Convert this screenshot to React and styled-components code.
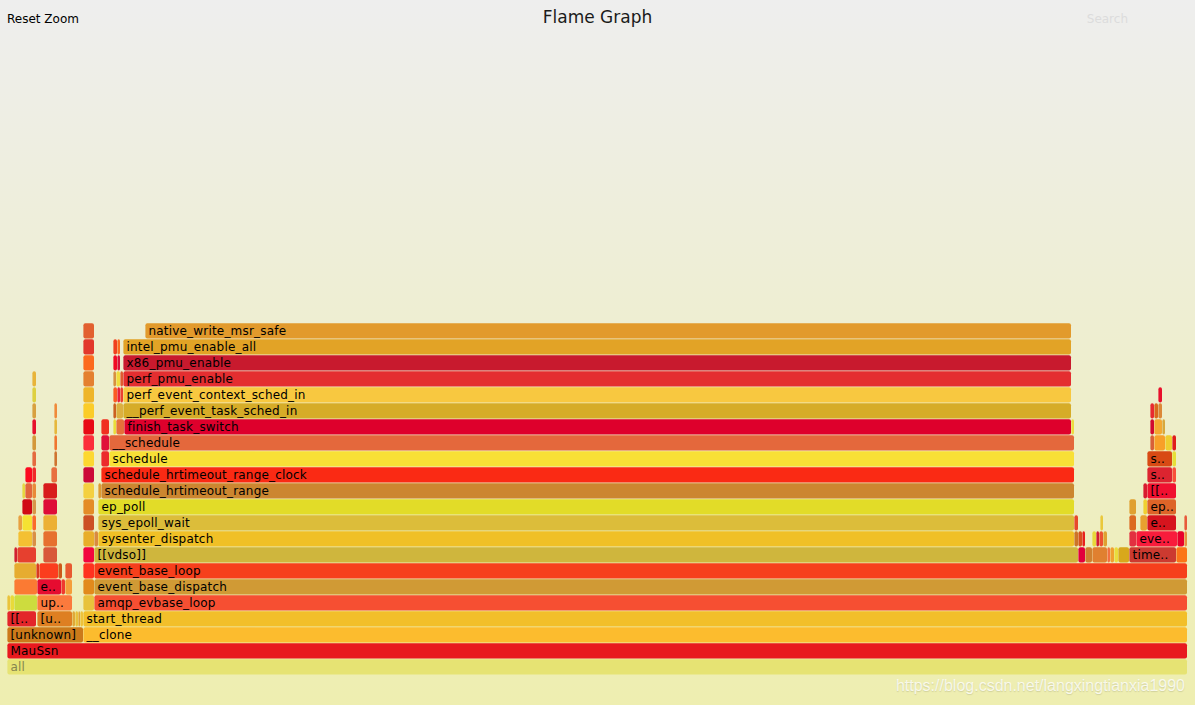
import React from "react";
import styled, { createGlobalStyle } from "styled-components";

const GlobalStyle = createGlobalStyle`
  html, body {
    margin: 0;
    height: 100%;
    overflow: hidden;
  }
  body {
    font-family: "DejaVu Sans", Verdana, sans-serif;
  }
`;

const Page = styled.div`
  position: relative;
  display: flex;
  flex-direction: column;
  justify-content: space-between;
  height: 100vh;
  background: linear-gradient(to bottom, #eeeeee, #eeeeb0);
`;

const Header = styled.header`
  display: grid;
  grid-template-columns: 1fr auto 1fr;
  align-items: start;
  padding: 8px 7px 0;
`;

const HeaderLink = styled.span`
  margin-top: 1px;
  margin-right: ${(p) => p.$inset || 0}px;
  font-size: 12px;
  line-height: 20px;
  color: ${(p) => p.$color || "#000"};
  justify-self: ${(p) => p.$align || "start"};
`;

const Title = styled.h1`
  margin: 0;
  font-size: 17px;
  font-weight: 400;
  line-height: 18px;
  color: #1a1a1a;
`;

const Chart = styled.svg`
  display: block;
  width: 1195px;
  height: 385px;
`;

const Frame = styled.rect`
  rx: 2px;
  ry: 2px;
  height: 15.2px;
`;

const FrameLabel = styled.text`
  font-family: "DejaVu Sans", Verdana, sans-serif;
  font-size: 12px;
  letter-spacing: 0.19px;
  fill: ${(p) => p.$color || "#000"};
`;

const Watermark = styled.div`
  position: absolute;
  right: 10px;
  bottom: 9px;
  font-family: "Liberation Sans", Arial, sans-serif;
  font-size: 16px;
  line-height: 20px;
  color: rgba(255, 255, 255, 0.78);
  text-shadow: 0 1px 1px rgba(110, 110, 80, 0.22);
`;

// one list per stack depth, bottom row first: [x1, x2, colour, label]
const rows = [
  [[7, 1187, "#e6e373", "all"]],
  [[7, 1187, "#e8191e", "MauSsn"]],
  [
    [7, 83, "#cc7a1a", "[unknown]"],
    [83, 1187, "#fcbc2e", "__clone"],
  ],
  [
    [7, 36, "#e3262a", "[[.."],
    [37, 72, "#de7f22", "[u.."],
    [72, 75, "#e0a838"],
    [75, 78, "#e8c03a"],
    [78, 80, "#e0a030"],
    [80, 83, "#eec23a"],
    [83, 1187, "#f2bf2a", "start_thread"],
  ],
  [
    [7, 10, "#eac33a"],
    [10, 14, "#e8da3a"],
    [14, 37, "#cddc3e"],
    [37, 72, "#fb7a3d", "up.."],
    [83, 94, "#e8c23c"],
    [94, 1187, "#f64f32", "amqp_evbase_loop"],
  ],
  [
    [14, 37, "#fb7a33"],
    [37, 61, "#e60c30", "e.."],
    [61, 65, "#ef3a2f"],
    [65, 72, "#f59e3a"],
    [83, 94, "#e28a1c"],
    [94, 1187, "#d09a35", "event_base_dispatch"],
  ],
  [
    [14, 36, "#e6ac30"],
    [36, 39, "#d93a20"],
    [39, 58, "#fb3d1e"],
    [58, 62, "#cc5a1a"],
    [65, 72, "#e85a30"],
    [83, 94, "#ff3220"],
    [94, 1187, "#f63f1c", "event_base_loop"],
  ],
  [
    [14, 17, "#d22030"],
    [17, 36, "#e6402f"],
    [43, 57, "#d8583a"],
    [83, 94, "#f2063e"],
    [94, 1078, "#cfb63d", "[[vdso]]"],
    [1078, 1085, "#e2003c"],
    [1085, 1092, "#cf8030"],
    [1092, 1107, "#e08030"],
    [1107, 1110, "#f27040"],
    [1110, 1114, "#f0a030"],
    [1114, 1118, "#eadc3c"],
    [1118, 1129, "#d8a81c"],
    [1129, 1176, "#cc3a30", "time.."],
    [1176, 1187, "#fb7518"],
  ],
  [
    [18, 32, "#f4c032"],
    [32, 36, "#d98f45"],
    [43, 57, "#e6702f"],
    [83, 94, "#e8ae2a"],
    [94, 98, "#d98a40"],
    [98, 1074, "#f0c026", "sysenter_dispatch"],
    [1074, 1078, "#cc7428"],
    [1078, 1082, "#d8501e"],
    [1082, 1085, "#e8201c"],
    [1092, 1096, "#e8d83a"],
    [1096, 1099, "#d01c30"],
    [1099, 1103, "#ec5030"],
    [1103, 1107, "#e0a030"],
    [1129, 1136, "#e23040"],
    [1136, 1177, "#f81c3c", "eve.."],
    [1177, 1184, "#e8002c"],
    [1184, 1187, "#e89040"],
  ],
  [
    [18, 22, "#e8a040"],
    [22, 32, "#f5e232"],
    [32, 36, "#fa6a2a"],
    [43, 57, "#ecb034"],
    [83, 94, "#cc5023"],
    [98, 1074, "#dcbd3a", "sys_epoll_wait"],
    [1074, 1078, "#e8482a"],
    [1100, 1103, "#eac83c"],
    [1129, 1136, "#dc6a20"],
    [1140, 1147, "#e8a030"],
    [1147, 1176, "#d6141e", "e.."],
    [1184, 1187, "#e85a3a"],
  ],
  [
    [22, 32, "#d00a14"],
    [32, 36, "#d89648"],
    [43, 57, "#de0c38"],
    [83, 94, "#e48c26"],
    [98, 1074, "#e2dc28", "ep_poll"],
    [1129, 1136, "#e0a030"],
    [1143, 1147, "#f0d030"],
    [1147, 1176, "#dd6428", "ep.."],
  ],
  [
    [22, 25, "#e6d840"],
    [25, 32, "#e2653c"],
    [32, 36, "#e98a3a"],
    [43, 57, "#d81c1c"],
    [83, 94, "#f4d040"],
    [98, 101, "#dd9a30"],
    [101, 1074, "#cc8630", "schedule_hrtimeout_range"],
    [1143, 1147, "#d81c30"],
    [1147, 1176, "#f01030", "[[.."],
  ],
  [
    [25, 32, "#fc0a20"],
    [32, 36, "#f02a2a"],
    [51, 57, "#e86f40"],
    [83, 94, "#cc0a38"],
    [101, 1074, "#fa2a14", "schedule_hrtimeout_range_clock"],
    [1147, 1172, "#dc2430", "s.."],
    [1172, 1176, "#f8503a"],
  ],
  [
    [32, 36, "#e46a40"],
    [54, 57, "#cf7430"],
    [83, 94, "#fdd830"],
    [101, 109, "#ec2a2c"],
    [109, 1074, "#f8e036", "schedule"],
    [1147, 1172, "#d84a14", "s.."],
    [1172, 1176, "#e6e038"],
  ],
  [
    [32, 36, "#d4983a"],
    [54, 57, "#f0752f"],
    [83, 94, "#fc2e3a"],
    [101, 109, "#e0103a"],
    [109, 1074, "#e4683c", "__schedule"],
    [1150, 1154, "#d86038"],
    [1154, 1165, "#f8a028"],
    [1165, 1172, "#eece30"],
    [1172, 1176, "#e01c1c"],
  ],
  [
    [32, 36, "#e6102c"],
    [54, 57, "#e6b83c"],
    [83, 94, "#e80a14"],
    [101, 109, "#f03020"],
    [113, 116, "#eadc3a"],
    [116, 124, "#e6703a"],
    [124, 1071, "#de002c", "finish_task_switch"],
    [1071, 1074, "#ecdc40"],
    [1150, 1154, "#d00a30"],
    [1154, 1162, "#f4a830"],
    [1162, 1165, "#d8a83c"],
  ],
  [
    [32, 36, "#d8a040"],
    [54, 57, "#f08a3a"],
    [83, 94, "#fbcc28"],
    [113, 116, "#cc6020"],
    [116, 123, "#dcb040"],
    [123, 1071, "#d6ac28", "__perf_event_task_sched_in"],
    [1150, 1154, "#e82a30"],
    [1154, 1158, "#d86a1c"],
    [1158, 1162, "#dc8838"],
  ],
  [
    [32, 36, "#ded040"],
    [83, 94, "#eeb52a"],
    [113, 117, "#fb5a24"],
    [117, 120, "#e8203a"],
    [120, 123, "#ec4030"],
    [123, 1071, "#f8c840", "perf_event_context_sched_in"],
    [1158, 1162, "#e8102c"],
  ],
  [
    [32, 36, "#e8b43a"],
    [83, 94, "#e48030"],
    [113, 116, "#d89040"],
    [116, 120, "#f0dc3c"],
    [120, 123, "#e05a30"],
    [123, 1071, "#e42e30", "perf_pmu_enable"],
  ],
  [
    [83, 94, "#fc6a1e"],
    [113, 117, "#f00a24"],
    [117, 120, "#d8103a"],
    [123, 1071, "#c81a2e", "x86_pmu_enable"],
  ],
  [
    [83, 94, "#e2382c"],
    [113, 117, "#f0401e"],
    [117, 120, "#fa6a20"],
    [123, 1071, "#e2a326", "intel_pmu_enable_all"],
  ],
  [
    [83, 94, "#e26030"],
    [145, 1071, "#e29a2c", "native_write_msr_safe"],
  ],
];

export default function App() {
  return (
    <Page>
      <GlobalStyle />
      <Header>
        <HeaderLink>Reset Zoom</HeaderLink>
        <Title>Flame Graph</Title>
        <HeaderLink $align="end" $color="#dcdcdc" $inset={60}>
          Search
        </HeaderLink>
      </Header>

      <Chart viewBox="0 0 1195 385">
        {rows.map((row, depth) =>
          row.map(([x1, x2, color, label]) => {
            const y = 339.3 - depth * 16;
            return (
              <g key={`${depth}-${x1}`}>
                <Frame x={x1 + 0.4} y={y} width={x2 - x1 - 0.4} fill={color} />
                {label && (
                  <FrameLabel
                    x={x1 + 3.5}
                    y={y + 11.7}
                    $color={label === "all" ? "#85854f" : "#000"}
                  >
                    {label}
                  </FrameLabel>
                )}
              </g>
            );
          })
        )}
      </Chart>

      <Watermark>https://blog.csdn.net/langxingtianxia1990</Watermark>
    </Page>
  );
}
